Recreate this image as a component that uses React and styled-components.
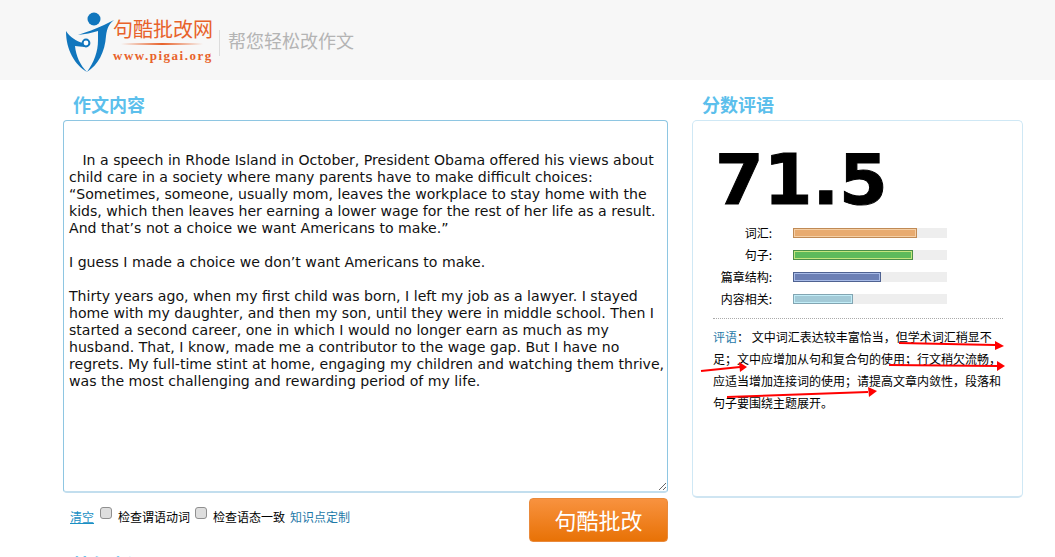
import React from 'react';
import styled, { createGlobalStyle } from 'styled-components';

const CJK = '"Noto Sans CJK SC", "Liberation Sans", sans-serif';

const Global = createGlobalStyle`
    html, body {
        margin: 0;
        padding: 0;
        height: 557px;
        overflow: hidden;
        background: #fff;
        font-family: ${CJK};
    }
`;

const Header = styled.header`
    height: 80px;
    background: #f7f7f7;
    display: flex;
    align-items: flex-start;
    padding: 10px 0 0 60px;
    box-sizing: border-box;
`;

const LogoMark = styled.svg`
    width: 60px;
    height: 66px;
    flex: none;
`;

const LogoText = styled.div`
    display: flex;
    flex-direction: column;
    width: 100px;
    margin: 8px 0 0 -7px;
`;

const LogoName = styled.div`
    font-size: 20px;
    line-height: 22px;
    color: #e8622a;
    white-space: nowrap;
`;

const LogoRule = styled.div`
    height: 2px;
    margin: 3px 10px 3px 8px;
    background: linear-gradient(to right, rgba(232, 98, 42, 0), #e8622a 50%, rgba(232, 98, 42, 0));
`;

const LogoUrl = styled.div`
    font: bold 13px/15px "Liberation Serif", serif;
    letter-spacing: 1.5px;
    color: #e8622a;
    white-space: nowrap;
`;

const Divider = styled.div`
    width: 1px;
    height: 26px;
    background: #dcdcdc;
    margin: 20px 8px 0 6px;
`;

const Tagline = styled.div`
    font-size: 18px;
    line-height: 24px;
    margin-top: 18px;
    color: #b4b4b4;
`;

const Main = styled.main`
    display: grid;
    grid-template-columns: 605px 331px;
    column-gap: 24px;
    margin-left: 63px;
`;

const Column = styled.section`
    display: flex;
    flex-direction: column;
`;

const Title = styled.h2`
    margin: 0;
    padding-left: 10px;
    height: 40px;
    font-size: 18px;
    line-height: 48px;
    font-weight: bold;
    color: #5cbfec;
`;

const NextTitle = styled(Title)`
    margin-top: -2px;
`;

const Essay = styled.textarea`
    display: block;
    width: 605px;
    height: 373px;
    box-sizing: border-box;
    margin: 0;
    padding: 14px 2px 0 5px;
    border: 1px solid #8ec6e2;
    border-bottom: 2px solid #c2deee;
    border-radius: 4px;
    outline: none;
    font: 14.1px/17px "DejaVu Sans", sans-serif;
    color: #111;
    background: #fff;
    white-space: pre-wrap;
`;

const Controls = styled.div`
    display: flex;
    justify-content: space-between;
    height: 49px;
    padding: 5px 0 0 7px;
    box-sizing: border-box;
`;

const Options = styled.div`
    display: flex;
    align-items: center;
    height: 36px;
    font-size: 12px;
    color: #000;
`;

const Link = styled.a`
    color: ${p => p.$strong ? '#1a90c4' : '#1f7aa8'};
    text-decoration: ${p => p.$strong ? 'underline' : 'none'};
    margin-right: ${p => p.$strong ? 1 : 0}px;
    cursor: pointer;
`;

const Check = styled.input.attrs({ type: 'checkbox' })`
    width: 12px;
    height: 12px;
    margin: 0 6px 6px 5px;
    appearance: none;
    border: 1px solid #8f8f8f;
    border-radius: 3px;
    background: #dedede;
`;

const Label = styled.span`
    margin-right: ${p => p.$gap || 0}px;
`;

const Submit = styled.button`
    width: 139px;
    height: 44px;
    padding: 0 0 3px;
    border: 1px solid #e98a3c;
    border-radius: 4px;
    background: linear-gradient(to bottom, #f8923f, #e87206);
    color: #fff;
    font: 22px/38px ${CJK};
`;

const Card = styled.div`
    position: relative;
    height: 378px;
    box-sizing: border-box;
    border: 1px solid #cfe8f5;
    border-bottom: 2px solid #cfe5f2;
    border-radius: 5px;
    padding: 0 20px;
`;

const Score = styled.div`
    font: bold 70px/60px "DejaVu Sans", sans-serif;
    -webkit-text-stroke: 1px #000;
    color: #000;
    height: 60px;
    margin: 29px 0 0 2px;
`;

const Bars = styled.div`
    display: flex;
    flex-direction: column;
    gap: 12px;
    margin-top: 18px;
`;

const BarRow = styled.div`
    display: flex;
    align-items: center;
    height: 10px;
`;

const BarLabel = styled.div`
    width: 59px;
    text-align: right;
    font-size: 12px;
    line-height: 12px;
    color: #000;
`;

const Track = styled.div`
    width: 154px;
    height: 10px;
    margin-left: 21px;
    background: #eee;
`;

const Fill = styled.div`
    height: 10px;
    box-sizing: border-box;
    border: 1px solid ${p => p.$edge};
    box-shadow: inset 0 0 0 1px ${p => p.$light};
    background: ${p => p.$color};
`;

const Comment = styled.div`
    margin-top: 14px;
    width: 290px;
    border-top: 1px dotted #aaa;
    padding-top: 7px;
    font-size: 12px;
    line-height: 22px;
    color: #000;
`;

const Arrows = styled.svg`
    position: absolute;
    top: 0;
    left: 0;
    width: 329px;
    height: 375px;
    pointer-events: none;
`;

const essay = `
   In a speech in Rhode Island in October, President Obama offered his views about child care in a society where many parents have to make difficult choices: “Sometimes, someone, usually mom, leaves the workplace to stay home with the kids, which then leaves her earning a lower wage for the rest of her life as a result. And that’s not a choice we want Americans to make.”

I guess I made a choice we don’t want Americans to make.

Thirty years ago, when my first child was born, I left my job as a lawyer. I stayed home with my daughter, and then my son, until they were in middle school. Then I started a second career, one in which I would no longer earn as much as my husband. That, I know, made me a contributor to the wage gap. But I have no regrets. My full-time stint at home, engaging my children and watching them thrive, was the most challenging and rewarding period of my life.`;

const bars = [
    { label: '词汇', width: 124, color: '#e8ab70', edge: '#c08a55', light: '#f5cfa5' },
    { label: '句子', width: 120, color: '#5dbb5b', edge: '#4b8f48', light: '#c5e67e' },
    { label: '篇章结构', width: 88, color: '#6c80b5', edge: '#4f6291', light: '#a9bce8' },
    { label: '内容相关', width: 60, color: '#a3cad7', edge: '#82a5b2', light: '#c2edf7' },
];

const arrows = [
    { d: 'M206 222 L302 224', head: '302,220 311,225 302,229' },
    { d: 'M8 250 L47 246', head: '46,241 54,246 47,251' },
    { d: 'M196 244 L304 245', head: '304,240 312,245 304,250' },
    { d: 'M34 276 L175 271', head: '175,266 184,270 176,276' },
];

function App() {
    return (
        <>
            <Global />
            <Header>
                <LogoMark viewBox="0 0 60 66">
                    <circle cx="34" cy="9" r="6.5" fill="#1176bd" />
                    <path fill="#1176bd" d="M44 15 L54 10 C49 14 47 18 46 26 C45 42 38 55 27 62 C34 52 38 42 38 30 C38 25 38 23 38 21 C32 23 25 24 18 25 C26 22 36 19 44 15 Z" />
                    <path fill="#1176bd" d="M6 21 C10 27 16 31 23 33 L25 37 C21 37 18 36 15 36 C16 46 20 55 27 62 C15 55 6 40 6 21 Z" />
                    <circle cx="26" cy="33" r="3.4" fill="#fff" stroke="#1176bd" strokeWidth="2" />
                </LogoMark>
                <LogoText>
                    <LogoName>句酷批改网</LogoName>
                    <LogoRule />
                    <LogoUrl>www.pigai.org</LogoUrl>
                </LogoText>
                <Divider />
                <Tagline>帮您轻松改作文</Tagline>
            </Header>
            <Main>
                <Column>
                    <Title>作文内容</Title>
                    <Essay defaultValue={essay} spellCheck={false} />
                    <Controls>
                        <Options>
                            <Link $strong>清空</Link>
                            <Check />
                            <Label>检查谓语动词</Label>
                            <Check />
                            <Label $gap={5}>检查语态一致</Label>
                            <Link>知识点定制</Link>
                        </Options>
                        <Submit>句酷批改</Submit>
                    </Controls>
                    <NextTitle>按句点评</NextTitle>
                </Column>
                <Column>
                    <Title>分数评语</Title>
                    <Card>
                        <Score>71.5</Score>
                        <Bars>
                            {bars.map(b => (
                                <BarRow key={b.label}>
                                    <BarLabel>{b.label}:</BarLabel>
                                    <Track>
                                        <Fill $color={b.color} $edge={b.edge} $light={b.light} style={{ width: b.width }} />
                                    </Track>
                                </BarRow>
                            ))}
                        </Bars>
                        <Comment>
                            <Link>评语</Link>： 文中词汇表达较丰富恰当，但学术词汇稍显不足；文中应增加从句和复合句的使用；行文稍欠流畅，应适当增加连接词的使用；请提高文章内敛性，段落和句子要围绕主题展开。
                        </Comment>
                        <Arrows viewBox="0 0 329 375">
                            {arrows.map(a => (
                                <g key={a.d}>
                                    <path d={a.d} stroke="#f00" strokeWidth="2" fill="none" />
                                    <polygon points={a.head} fill="#f00" />
                                </g>
                            ))}
                        </Arrows>
                    </Card>
                </Column>
            </Main>
        </>
    );
}

export default App;
